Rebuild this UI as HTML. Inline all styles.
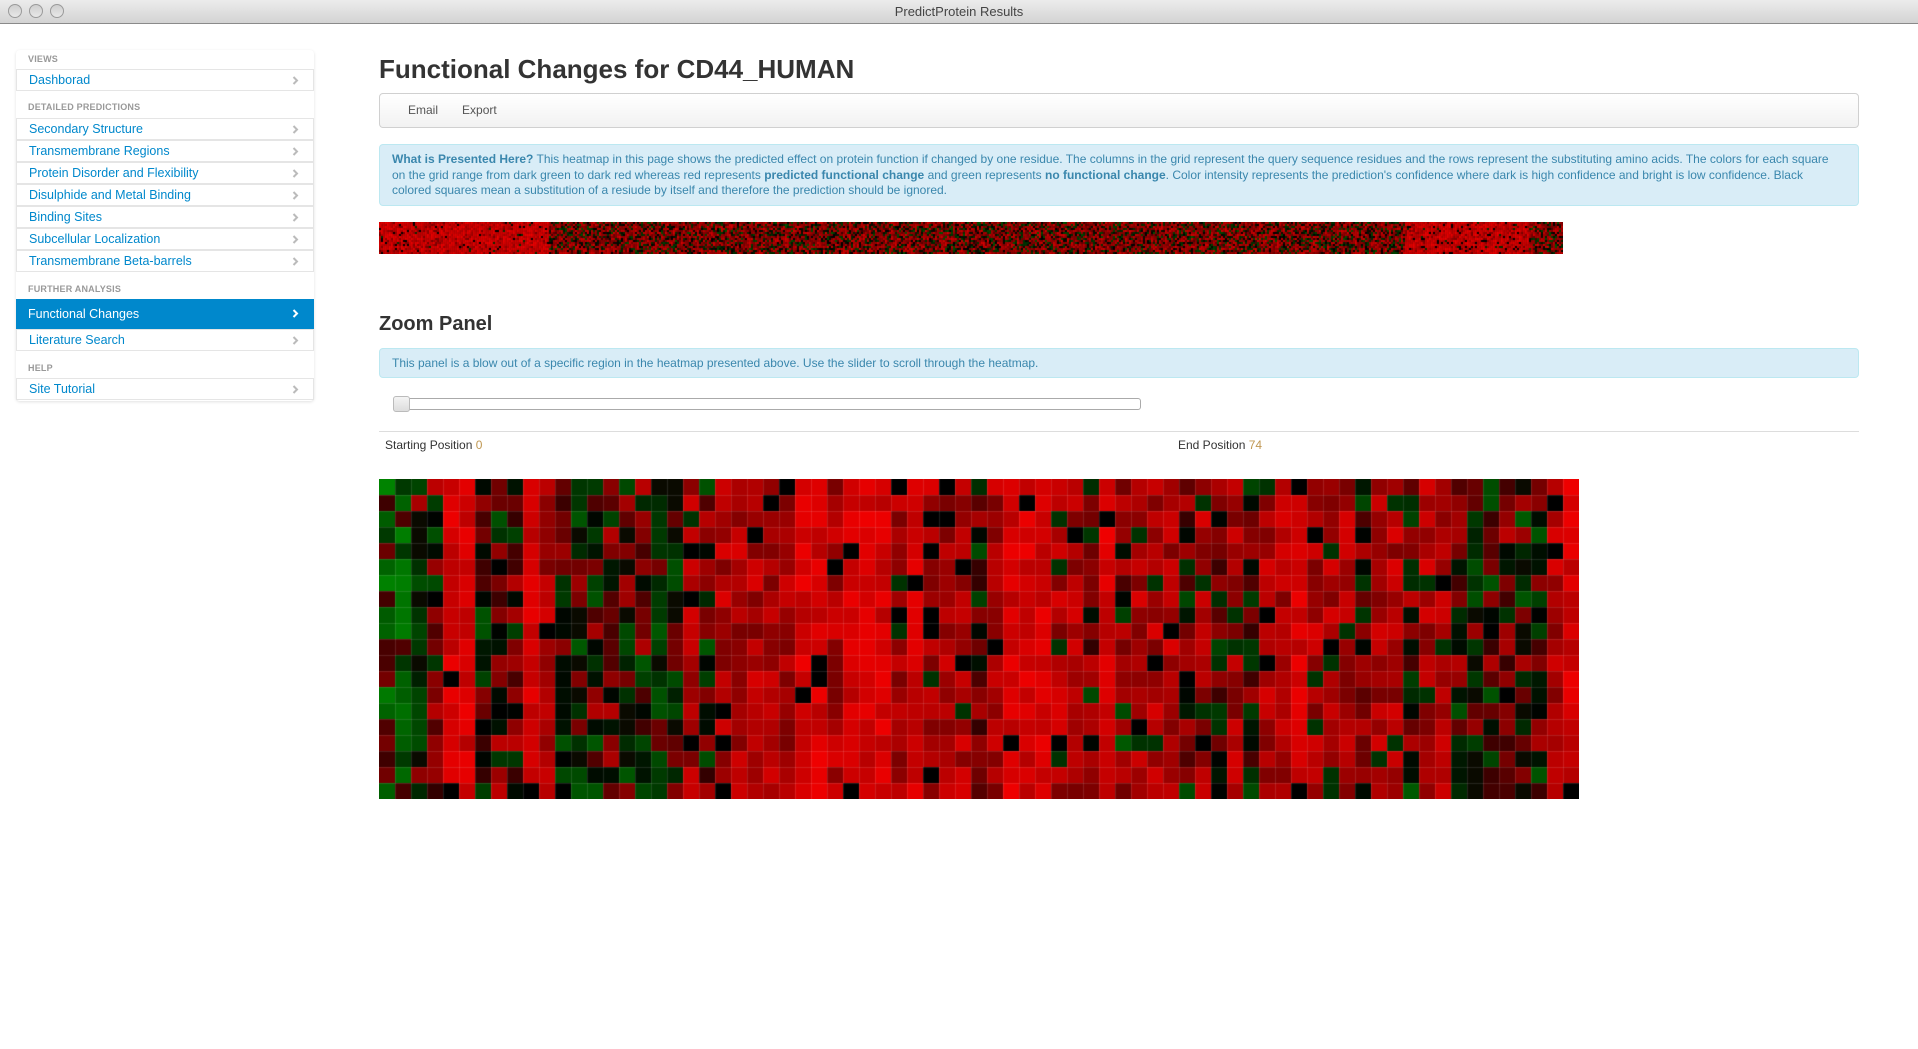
<!DOCTYPE html>
<html><head><meta charset="utf-8"><style>
*{margin:0;padding:0;box-sizing:border-box}
body{width:1918px;height:1049px;background:#fff;font-family:"Liberation Sans",Arial,sans-serif;position:relative;overflow:hidden;color:#333}
.tb{position:absolute;left:0;top:0;width:1918px;height:24px;background:linear-gradient(#ececec,#d3d3d3);border-bottom:1px solid #8a8a8a;text-align:center;font-size:13px;line-height:23px;color:#444}
.dot{position:absolute;top:4px;width:14px;height:14px;border-radius:50%;background:linear-gradient(#cfcfcf,#e8e8e8);border:1px solid #9a9a9a}
.side{position:absolute;left:16px;top:50px;width:298px;height:351px;border-radius:4px;box-shadow:0 1px 3px rgba(0,0,0,.12)}
.lbl{position:absolute;left:12px;font-size:9px;font-weight:bold;color:#999;letter-spacing:.2px}
.row{position:absolute;left:0;width:298px;height:22px;border:1px solid #e5e5e5;font-size:12.5px;color:#0088cc;line-height:20px;padding-left:12px;background:#fff}
.row svg{position:absolute;right:14px;top:6px}
.row.act{background:#0088cc;color:#fff;height:30px;line-height:28px;border-color:#0088cc;padding-left:11px}
.row.act svg{top:9px}
.main{position:absolute;left:379px;width:1480px}
.info{position:absolute;left:379px;width:1480px;background:#d9edf7;border:1px solid #bce8f1;border-radius:4px;color:#3a87ad;font-size:12px;white-space:nowrap}
</style></head><body>
<div class="tb">PredictProtein Results</div>
<div class="dot" style="left:8px"></div><div class="dot" style="left:29px"></div><div class="dot" style="left:50px"></div>

<div class="side">
<div class="lbl" style="top:4px">VIEWS</div>
<div class="row" style="top:19px">Dashborad</div>
<div class="lbl" style="top:52px">DETAILED PREDICTIONS</div>
<div class="row" style="top:68px">Secondary Structure</div>
<div class="row" style="top:90px">Transmembrane Regions</div>
<div class="row" style="top:112px">Protein Disorder and Flexibility</div>
<div class="row" style="top:134px">Disulphide and Metal Binding</div>
<div class="row" style="top:156px">Binding Sites</div>
<div class="row" style="top:178px">Subcellular Localization</div>
<div class="row" style="top:200px">Transmembrane Beta-barrels</div>
<div class="lbl" style="top:234px">FURTHER ANALYSIS</div>
<div class="row act" style="top:249px">Functional Changes</div>
<div class="row" style="top:279px">Literature Search</div>
<div class="lbl" style="top:313px">HELP</div>
<div class="row" style="top:328px">Site Tutorial</div>
</div>

<div class="main" style="top:54px;font-size:26px;font-weight:bold;color:#333">Functional Changes for CD44_HUMAN</div>
<div class="main" style="top:93px;height:35px;border:1px solid #d0d0d0;border-radius:4px;background:linear-gradient(#fff,#f2f2f2);font-size:12px;color:#555;line-height:33px"><span style="margin-left:28px">Email</span><span style="margin-left:24px">Export</span></div>
<div class="info" style="top:144px;height:62px;padding:7px 12px;line-height:15.6px"><b>What is Presented Here?</b> This heatmap in this page shows the predicted effect on protein function if changed by one residue. The columns in the grid represent the query sequence residues and the rows represent the substituting amino acids. The colors for each square<br>on the grid range from dark green to dark red whereas red represents <b>predicted functional change</b> and green represents <b>no functional change</b>. Color intensity represents the prediction's confidence where dark is high confidence and bright is low confidence. Black<br>colored squares mean a substitution of a resiude by itself and therefore the prediction should be ignored.</div>
<canvas id="ov" width="1184" height="32" style="position:absolute;left:379px;top:222px"></canvas>
<div class="main" style="top:313px;font-size:20px;font-weight:bold;color:#333">Zoom Panel</div>
<div class="info" style="top:348px;height:30px;padding:0 12px;line-height:28px">This panel is a blow out of a specific region in the heatmap presented above. Use the slider to scroll through the heatmap.</div>
<div style="position:absolute;left:393px;top:398px;width:748px;height:12px;border:1px solid #aaa;border-radius:3px;background:#fff"></div>
<div style="position:absolute;left:393px;top:396px;width:17px;height:16px;border:1px solid #bbb;border-radius:3px;background:linear-gradient(#f4f4f4,#ddd)"></div>
<div style="position:absolute;left:379px;top:431px;width:1480px;height:1px;background:#ddd"></div>
<div style="position:absolute;left:385px;top:438px;font-size:12px;color:#333">Starting Position <span style="color:#c09853">0</span></div>
<div style="position:absolute;left:1178px;top:438px;font-size:12px;color:#333">End Position <span style="color:#c09853">74</span></div>
<canvas id="hm" width="1200" height="320" style="position:absolute;left:379px;top:479px"></canvas>
<script>
document.querySelectorAll('.row').forEach(function(e){var w=e.classList.contains('act');e.insertAdjacentHTML('beforeend','<svg width="7" height="9" viewBox="0 0 7 9"><path d="M1.5 1l3.5 3.5-3.5 3.5" fill="none" stroke="'+(w?'#fff':'#bbb')+'" stroke-width="2"/></svg>');});
var s=12345;function r(){s=(s*16807)%2147483647;return s/2147483647;}
var bias="GGgdRRdddRrdgddgdggrdrrrrrRRrRRRrRrrrdrRRRrrdRdrrrdrdrdrrRrrrdrrdrrdgddgdrR";
function col(b){var x=r();
 if(b=='G'){if(x<.6)return [0,90+r()*50|0,0];if(x<.85)return [0,40+r()*30|0,0];return [60+r()*60|0,0,0];}
 if(b=='g'){if(x<.5)return [0,30+r()*60|0,0];if(x<.75)return [10,10,0];return [90+r()*80|0,0,0];}
 if(b=='d'){if(x<.25)return [0,r()*25|0,0];if(x<.45)return [0,40+r()*50|0,0];return [50+r()*140|0,0,0];}
 if(b=='r'){if(x<.07)return [0,0,0];if(x<.12)return [0,50,0];return [120+r()*100|0,0,0];}
 if(x<.05)return [0,0,0];return [180+r()*60|0,0,0];}
var c=document.getElementById('hm').getContext('2d');
for(var i=0;i<75;i++)for(var j=0;j<20;j++){var k=col(bias[i]);c.fillStyle='rgb('+k+')';c.fillRect(i*16,j*16,16,16);}
c.fillStyle='rgba(255,255,255,0.12)';for(var i=1;i<75;i++)c.fillRect(i*16,0,1,320);for(var j=1;j<20;j++)c.fillRect(0,j*16,1200,1);
var o=document.getElementById('ov').getContext('2d');o.fillStyle='#400';o.fillRect(0,0,1184,32);
for(var i=0;i<592;i++){var x=i*2;var hot=(x<170)||(x>1025&&x<1150);
 for(var j=0;j<16;j++){var b=hot?(r()<.75?'R':'r'):(r()<.55?'r':(r()<.6?'d':'g'));var k=col(b);o.fillStyle='rgb('+k+')';o.fillRect(x,j*2,2,2);}}
o.fillStyle='rgba(0,0,0,0.25)';for(var i=0;i<592;i+=1)o.fillRect(i*2+1.6,0,0.4,32);
</script>
</body></html>
